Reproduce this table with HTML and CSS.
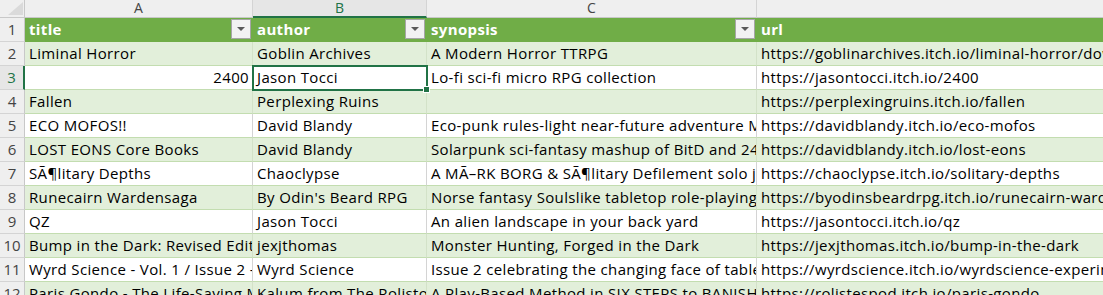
FILE: index.html
```html
<!DOCTYPE html>
<html>
<head>
<meta charset="utf-8">
<link rel="stylesheet" href="styles.css">
</head>
<body>
<div class="sheet">
  <div class="row colhead">
    <div class="corner"><svg width="25" height="17" viewBox="0 0 25 17"><polygon points="23,2 23,15 8,15" fill="#dadada"/></svg></div>
    <div class="ch">A</div>
    <div class="ch ch-sel">B</div>
    <div class="ch">C</div>
    <div class="ch">D</div>
  </div>
  <div class="row thead">
    <div class="rn">1</div>
    <div class="cell th"><span class="tt">title</span><span class="filter"><i></i></span></div>
    <div class="cell th"><span class="tt">author</span><span class="filter"><i></i></span></div>
    <div class="cell th"><span class="tt">synopsis</span><span class="filter"><i></i></span></div>
    <div class="cell th"><span class="tt">url</span></div>
  </div>
  <div class="row band">
    <div class="rn">2</div>
    <div class="cell">Liminal Horror</div>
    <div class="cell">Goblin Archives</div>
    <div class="cell">A Modern Horror TTRPG</div>
    <div class="cell">https://goblinarchives.itch.io/liminal-horror/download</div>
  </div>
  <div class="row plain">
    <div class="rn rn-sel">3</div>
    <div class="cell num">2400</div>
    <div class="cell sel">Jason Tocci</div>
    <div class="cell">Lo-fi sci-fi micro RPG collection</div>
    <div class="cell">https://jasontocci.itch.io/2400</div>
  </div>
  <div class="row band">
    <div class="rn">4</div>
    <div class="cell">Fallen</div>
    <div class="cell">Perplexing Ruins</div>
    <div class="cell"></div>
    <div class="cell">https://perplexingruins.itch.io/fallen</div>
  </div>
  <div class="row plain">
    <div class="rn">5</div>
    <div class="cell">ECO MOFOS!!</div>
    <div class="cell">David Blandy</div>
    <div class="cell">Eco-punk rules-light near-future adventure MOFOS</div>
    <div class="cell">https://davidblandy.itch.io/eco-mofos</div>
  </div>
  <div class="row band">
    <div class="rn">6</div>
    <div class="cell">LOST EONS Core Books</div>
    <div class="cell">David Blandy</div>
    <div class="cell">Solarpunk sci-fantasy mashup of BitD and 24XX</div>
    <div class="cell">https://davidblandy.itch.io/lost-eons</div>
  </div>
  <div class="row plain">
    <div class="rn">7</div>
    <div class="cell">SÃ¶litary Depths</div>
    <div class="cell">Chaoclypse</div>
    <div class="cell">A MÃ–RK BORG &amp; SÃ¶litary Defilement solo journaling game</div>
    <div class="cell">https://chaoclypse.itch.io/solitary-depths</div>
  </div>
  <div class="row band">
    <div class="rn">8</div>
    <div class="cell">Runecairn Wardensaga</div>
    <div class="cell">By Odin's Beard RPG</div>
    <div class="cell">Norse fantasy Soulslike tabletop role-playing game</div>
    <div class="cell">https://byodinsbeardrpg.itch.io/runecairn-wardensaga</div>
  </div>
  <div class="row plain">
    <div class="rn">9</div>
    <div class="cell">QZ</div>
    <div class="cell">Jason Tocci</div>
    <div class="cell">An alien landscape in your back yard</div>
    <div class="cell">https://jasontocci.itch.io/qz</div>
  </div>
  <div class="row band">
    <div class="rn">10</div>
    <div class="cell">Bump in the Dark: Revised Edition</div>
    <div class="cell">jexjthomas</div>
    <div class="cell">Monster Hunting, Forged in the Dark</div>
    <div class="cell">https://jexjthomas.itch.io/bump-in-the-dark</div>
  </div>
  <div class="row plain">
    <div class="rn">11</div>
    <div class="cell">Wyrd Science - Vol. 1 / Issue 2 - Experiments</div>
    <div class="cell">Wyrd Science</div>
    <div class="cell">Issue 2 celebrating the changing face of tabletop</div>
    <div class="cell">https://wyrdscience.itch.io/wyrdscience-experiments</div>
  </div>
  <div class="row band">
    <div class="rn">12</div>
    <div class="cell">Paris Gondo - The Life-Saving Method</div>
    <div class="cell">Kalum from The Rolistopod</div>
    <div class="cell">A Play-Based Method in SIX STEPS to BANISH</div>
    <div class="cell">https://rolistespod.itch.io/paris-gondo</div>
  </div>
</div>
</body>
</html>
```

FILE: styles.css
```css
html, body {
  margin: 0;
  padding: 0;
  background: #ffffff;
  overflow: hidden;
  width: 1103px;
  height: 295px;
}

.sheet {
  font-family: "Open Sans", "Liberation Sans", sans-serif;
  font-size: 15px;
  letter-spacing: 0.35px;
  font-variant-ligatures: none;
  color: #000000;
  width: 1557px;
}

.row {
  display: grid;
  grid-template-columns: 25px 228px 174px 330px 800px;
  height: 24px;
}

.colhead {
  height: 18px;
  background: #efefef;
}

.corner {
  box-sizing: border-box;
  border-right: 1px solid #c8c8c8;
  border-bottom: 1px solid #c8c8c8;
  height: 18px;
  overflow: hidden;
}

.corner svg {
  display: block;
}

.ch {
  box-sizing: border-box;
  height: 18px;
  border-right: 1px solid #d4d4d4;
  border-bottom: 1px solid #c8c8c8;
  text-align: center;
  color: #444444;
  font-size: 14px;
  letter-spacing: 0;
  line-height: 15px;
}

.ch-sel {
  background: #e6e6e6;
  color: #217346;
  border-bottom: 2px solid #217346;
}

.rn {
  box-sizing: border-box;
  background: #efefef;
  border-right: 1px solid #c8c8c8;
  border-bottom: 1px solid #d4d4d4;
  color: #444444;
  text-align: center;
  line-height: 23px;
  font-size: 15px;
  letter-spacing: 0;
}

.rn-sel {
  color: #217346;
  background: #e6e6e6;
  border-right: 2px solid #217346;
}

.cell {
  box-sizing: border-box;
  padding: 0 3px 0 4px;
  line-height: 23px;
  white-space: nowrap;
  overflow: hidden;
  border-right: 1px solid #d4d4d4;
  border-bottom: 1px solid #c3ddb0;
}

.band .cell {
  background: #e2efda;
  border-right-color: #d3e2c8;
}

.plain .cell {
  background: #ffffff;
}

.thead .cell {
  background: #70ad47;
  border-right-color: #70ad47;
  border-bottom-color: #70ad47;
}

.th {
  display: flex;
  justify-content: space-between;
  align-items: flex-start;
  padding-right: 1px;
}

.tt {
  color: #ffffff;
  font-weight: bold;
}

.filter {
  box-sizing: border-box;
  width: 20px;
  height: 20px;
  margin-top: 1px;
  background: #f2f2f2;
  border: 1px solid #a6a6a6;
  display: flex;
  align-items: center;
  justify-content: center;
  flex: none;
}

.filter i {
  display: block;
  width: 0;
  height: 0;
  border-left: 4px solid transparent;
  border-right: 4px solid transparent;
  border-top: 4px solid #595959;
}

.num {
  text-align: right;
}

.sel {
  position: relative;
  overflow: visible;
  outline: 2px solid #217346;
  outline-offset: -1px;
  z-index: 2;
}

.sel::after {
  content: "";
  position: absolute;
  right: -4px;
  bottom: -4px;
  width: 5px;
  height: 5px;
  background: #217346;
  border: 1px solid #ffffff;
}
```
